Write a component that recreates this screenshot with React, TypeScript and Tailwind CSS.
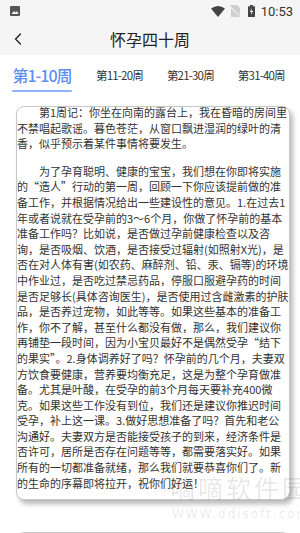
import { ChevronLeft } from 'lucide-react';

const tabs = ['第1-10周', '第11-20周', '第21-30周', '第31-40周'];

const week1 = [
  '第1周记：你坐在向南的露台上，我在昏暗的房间里不禁唱起歌谣。暮色苍茫，从窗口飘进湿润的绿叶的清香，似乎预示着某件事情将要发生。',
  '为了孕育聪明、健康的宝宝，我们想在你即将实施的“造人”行动的第一周，回顾一下你应该提前做的准备工作，并根据情况给出一些建设性的意见。1.在过去1年或者说就在受孕前的3～6个月，你做了怀孕前的基本准备工作吗？比如说，是否做过孕前健康检查以及咨询，是否吸烟、饮酒，是否接受过辐射(如照射X光)，是否在对人体有害(如农药、麻醉剂、铅、汞、镉等)的环境中作业过，是否吃过禁忌药品，停服口服避孕药的时间是否足够长(具体咨询医生)，是否使用过含雌激素的护肤品，是否养过宠物，如此等等。如果这些基本的准备工作，你不了解，甚至什么都没有做，那么，我们建议你再铺垫一段时间，因为小宝贝最好不是偶然受孕“结下的果实”。2.身体调养好了吗？怀孕前的几个月，夫妻双方饮食要健康，营养要均衡充足，这是为整个孕育做准备。尤其是叶酸，在受孕的前3个月每天要补充400微克。如果这些工作没有到位，我们还是建议你推迟时间受孕，补上这一课。3.做好思想准备了吗？首先和老公沟通好。夫妻双方是否能接受孩子的到来，经济条件是否许可，居所是否存在问题等等，都需要落实好。如果所有的一切都准备就绪，那么我们就要恭喜你们了。新的生命的序幕即将拉开，祝你们好运！',
];

const week2 = [
  '第2周记：迷朦中，我看见蝴蝶在阳光中飞舞，树叶沙沙作响，一切都充满了生机。',
];

function StatusBar() {
  return (
    <div className="flex h-[22px] items-center justify-between bg-[#f5f5f5] pl-[10px] pr-[7px]">
      <svg width="10" height="10" viewBox="0 0 10 10">
        <rect x="0" y="0" width="10" height="10" rx="1" fill="#555" />
        <path d="M1.5 8 L4 5 L5.5 6.5 L7 5 L8.5 8 Z" fill="#f5f5f5" />
      </svg>
      <div className="flex items-center">
        <svg width="14" height="11" viewBox="0 0 14 11" className="mr-[5px]">
          <path d="M0 2.5 Q7 -2.5 14 2.5 L7 11 Z" fill="#444" />
        </svg>
        <svg width="11" height="12" viewBox="0 0 11 12" className="mr-[7px]">
          <path d="M1 0 H7 L10 3 V12 H1 Z" fill="#cfcfcf" />
          <path d="M0 1 L11 12" stroke="#f5f5f5" strokeWidth="1.6" />
          <path d="M0.5 0.5 L10.5 11.5" stroke="#bdbdbd" strokeWidth="0.8" />
        </svg>
        <svg width="7" height="12" viewBox="0 0 7 12" className="mr-[6px]">
          <rect x="2" y="0" width="3" height="1.5" fill="#444" />
          <rect x="0" y="1.2" width="7" height="10.8" rx="0.6" fill="#444" />
          <path d="M4 3 L1.8 7 H3.4 L3 10 L5.2 6 H3.6 Z" fill="#f5f5f5" />
        </svg>
        <span className="text-[13px] leading-none text-[#333] [font-family:Roboto,'Noto_Sans',sans-serif]">
          10:53
        </span>
      </div>
    </div>
  );
}

function Header() {
  return (
    <div className="relative flex h-[33px] items-center justify-center bg-[#f5f5f5]">
      <ChevronLeft
        className="absolute left-[8px] top-[7px] text-[#222]"
        size={20}
        strokeWidth={1.6}
      />
      <h1 className="text-[16px] font-normal text-[#222]">怀孕四十周</h1>
    </div>
  );
}

function Tabs() {
  return (
    <div className="flex h-[37px] items-end gap-6 whitespace-nowrap bg-white pl-3">
      {tabs.map((tab, i) =>
        i === 0 ? (
          <div key={tab} className="flex shrink-0 flex-col items-center">
            <span className="text-[16px] font-medium leading-[22px] tracking-[-1px] text-[#5d8ef2]">
              {tab}
            </span>
            <div className="mt-[4px] h-[2px] w-[60px] rounded-full bg-[#8fb3f6]" />
          </div>
        ) : (
          <span
            key={tab}
            className="mb-[8px] shrink-0 text-[11.5px] leading-[17px] tracking-[-0.8px] text-[#333]"
          >
            {tab}
          </span>
        ),
      )}
    </div>
  );
}

function WeekCard({ paragraphs }: { paragraphs: string[] }) {
  return (
    <div className="ml-4 mr-[10px] rounded-lg border border-[#c8c8c8] bg-white pb-[8px] shadow-[3px_4px_5px_rgba(0,0,0,0.28)]">
      {paragraphs.map((p, i) => (
        <p
          key={i}
          className={`text-[11px] leading-[15.6px] text-[#333] [text-indent:2em] ${
            i === 0 ? '-mt-[2px]' : 'mt-[12px]'
          }`}
        >
          {p}
        </p>
      ))}
    </div>
  );
}

export default function App() {
  return (
    <div className="relative h-[533px] w-[300px] overflow-hidden bg-white [font-family:'Noto_Sans_CJK_SC','Noto_Sans',sans-serif]">
      <StatusBar />
      <Header />
      <Tabs />
      <div className="flex flex-col gap-[32px] pt-[14px]">
        <WeekCard paragraphs={week1} />
        <WeekCard paragraphs={week2} />
      </div>

      {/* watermark */}
      <div className="pointer-events-none absolute left-[170px] top-[472px] flex flex-col items-start whitespace-nowrap">
        <span className="text-[25px] leading-[30px] tracking-[3px] text-black/10">
          嘀嘀软件园
        </span>
        <span className="ml-[2px] mt-[5px] text-[12px] leading-[14px] tracking-[2px] text-black/10 [font-family:'DejaVu_Sans',sans-serif]">
          WWW.ddisoft.com
        </span>
      </div>
    </div>
  );
}
